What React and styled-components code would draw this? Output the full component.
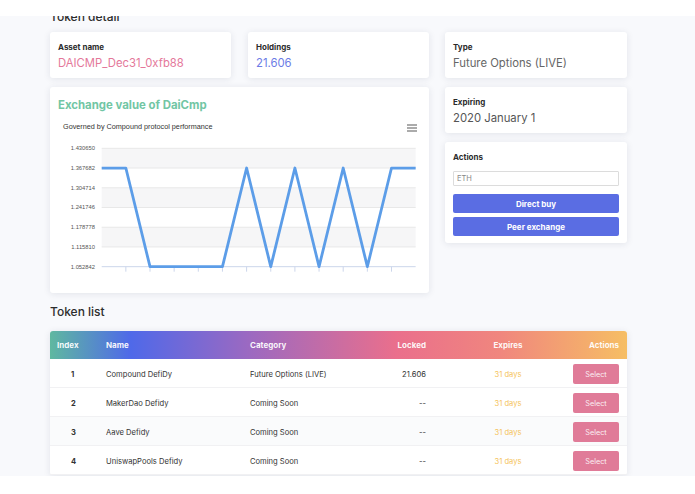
import styled, { createGlobalStyle } from 'styled-components'

const GlobalStyle = createGlobalStyle`
  body {
    margin: 0;
    background: #ffffff;
    font-family: Inter, "Noto Sans", sans-serif;
    color: #333;
  }
`

const TopBar = styled.header`
  height: 16px;
  background: #ffffff;
`

const Main = styled.main`
  background: #f8f9fc;
  padding: 0 50px 1px;
  overflow: hidden;
`

const Content = styled.div`
  width: 577px;
`

const Heading = styled.h2`
  margin: ${(p) => (p.$clipped ? '-6px' : '12px')} 0 0;
  font-size: 12px;
  line-height: 14px;
  font-weight: 500;
  color: #2d2d2d;
`

const DetailGrid = styled.div`
  display: grid;
  grid-template-columns: 379px 182px;
  column-gap: 16px;
  margin-top: 8px;
`

const Column = styled.div`
  display: flex;
  flex-direction: column;
  gap: 9px;
`

const CardRow = styled.div`
  display: grid;
  grid-template-columns: 181px 181px;
  column-gap: 17px;
`

const Card = styled.section`
  background: #ffffff;
  border-radius: 3px;
  box-shadow: 0 1px 7px rgba(30, 40, 70, 0.1);
  padding: 9px 8px 7px;
`

const Label = styled.div`
  font-size: 8px;
  line-height: 12px;
  font-weight: 700;
  color: #2b2b2b;
`

const Value = styled.div`
  margin-top: 2px;
  font-size: 11.3px;
  line-height: 16px;
  color: ${(p) => p.$color || '#666'};
`

const ChartCard = styled(Card)`
  padding: 11px 8px 8px;
  height: 187px;
`

const ChartTitle = styled.h3`
  margin: 0;
  font-size: 11.4px;
  line-height: 14px;
  font-weight: 700;
  color: #72c6a4;
`

const ChartSvg = styled.svg`
  display: block;
  margin-top: 4px;
  font-family: "Liberation Sans", Arial, sans-serif;
`

const Input = styled.input`
  display: block;
  box-sizing: border-box;
  width: 100%;
  height: 15px;
  margin-top: 8px;
  padding: 0 3px;
  border: 1px solid #dcdcdc;
  border-radius: 1px;
  font-family: inherit;
  font-size: 7.5px;
  color: #333;
  &::placeholder {
    color: #888;
  }
`

const ButtonStack = styled.div`
  display: flex;
  flex-direction: column;
  gap: 4px;
  margin-top: 8px;
`

const PrimaryButton = styled.button`
  height: 19px;
  border: none;
  border-radius: 2px;
  background: #5a6de3;
  color: #fff;
  font-family: inherit;
  font-size: 8px;
  font-weight: 700;
`

const Table = styled.div`
  margin-top: 12px;
  background: #ffffff;
  border-radius: 3px;
  box-shadow: 0 1px 7px rgba(30, 40, 70, 0.1);
`

const Row = styled.div`
  display: grid;
  grid-template-columns: 56px 144px 96px 100px 124px 1fr;
  align-items: center;
  height: ${(p) => (p.$head ? '28px' : '29px')};
  padding: ${(p) => (p.$head ? '0 8px 0 0' : '2px 8px 0 0')};
  font-size: 7.6px;
  color: #333;
  background: ${(p) => (p.$shade ? '#fafbfc' : 'transparent')};
  border-bottom: ${(p) => (p.$head ? 'none' : '1px solid #f1f1f3')};
  box-sizing: border-box;
`

const HeadRow = styled(Row)`
  border-radius: 3px 3px 0 0;
  background: linear-gradient(90deg, #5fb8a0 0%, #4f69e9 14%, #9a69c2 34%, #ea6f8c 60%, #f0867e 78%, #f6be64 100%);
  color: rgba(255, 255, 255, 0.95);
  font-weight: 700;
  font-size: 8px;
`

const Cell = styled.div`
  text-align: ${(p) => p.$align || 'left'};
  padding-left: ${(p) => p.$pl || 0}px;
  padding-right: ${(p) => p.$pr || 0}px;
  font-weight: ${(p) => (p.$bold ? 700 : 'inherit')};
  color: ${(p) => p.$color || 'inherit'};
`

const ActionCell = styled.div`
  display: flex;
  justify-content: flex-end;
`

const SelectButton = styled.button`
  width: 46px;
  height: 20px;
  border: none;
  border-radius: 2px;
  background: #e07b98;
  color: rgba(255, 255, 255, 0.9);
  font-family: inherit;
  font-size: 7.3px;
`

const yLabels = ['1.430650', '1.367682', '1.304714', '1.241746', '1.178778', '1.115810', '1.052842']
const pattern = [1, 1, 0, 0, 0, 0, 1, 0, 1, 0, 1, 0, 1, 1]

const gy = (i) => 32.3 + i * 19.73
const gx = (i) => 43.7 + i * 24.15

const ExchangeChart = () => {
  const points = pattern.map((hi, i) => `${gx(i)},${hi ? gy(1) : gy(6)}`).join(' ')
  return (
    <ChartSvg width="363" height="164" viewBox="0 0 363 164">
      <text x="5" y="13" fontSize="7.25" fill="#333">Governed by Compound protocol performance</text>
      <g stroke="#666" strokeWidth="1.1">
        <line x1="349" x2="359" y1="9" y2="9" />
        <line x1="349" x2="359" y1="12" y2="12" />
        <line x1="349" x2="359" y1="15" y2="15" />
      </g>
      {[0, 2, 4].map((i) => (
        <rect key={i} x={gx(0)} y={gy(i)} width={gx(13) - gx(0)} height={19.73} fill="#f6f6f7" />
      ))}
      {yLabels.map((l, i) => (
        <g key={l}>
          <line x1={gx(0)} x2={gx(13)} y1={gy(i)} y2={gy(i)} stroke={i === 6 ? '#ccd6eb' : '#e8e8e8'} strokeWidth="1" />
          <text x="37" y={gy(i) + 2} fontSize="5.8" fill="#555" textAnchor="end">{l}</text>
        </g>
      ))}
      {pattern.slice(1, 13).map((_, k) => (
        <line key={k} x1={gx(k + 1)} x2={gx(k + 1)} y1={gy(6)} y2={gy(6) + 5} stroke="#ccd6eb" />
      ))}
      <polyline points={points} fill="none" stroke="#5c9de8" strokeWidth="2.8" strokeLinejoin="round" />
    </ChartSvg>
  )
}

const tokens = [
  { name: 'Compound DefiDy', category: 'Future Options (LIVE)', locked: '21.606' },
  { name: 'MakerDao Defidy', category: 'Coming Soon', locked: '--' },
  { name: 'Aave Defidy', category: 'Coming Soon', locked: '--' },
  { name: 'UniswapPools Defidy', category: 'Coming Soon', locked: '--' },
]

const App = () => {
  return (
    <>
      <GlobalStyle />
      <TopBar />
      <Main>
        <Content>
          <Heading $clipped>Token detail</Heading>
          <DetailGrid>
            <Column>
              <CardRow>
                <Card>
                  <Label>Asset name</Label>
                  <Value $color="#e4789a">DAICMP_Dec31_0xfb88</Value>
                </Card>
                <Card>
                  <Label>Holdings</Label>
                  <Value $color="#6b7be6">21.606</Value>
                </Card>
              </CardRow>
              <ChartCard>
                <ChartTitle>Exchange value of DaiCmp</ChartTitle>
                <ExchangeChart />
              </ChartCard>
            </Column>
            <Column>
              <Card>
                <Label>Type</Label>
                <Value>Future Options (LIVE)</Value>
              </Card>
              <Card>
                <Label>Expiring</Label>
                <Value $color="#555">2020 January 1</Value>
              </Card>
              <Card>
                <Label>Actions</Label>
                <Input placeholder="ETH" />
                <ButtonStack>
                  <PrimaryButton>Direct buy</PrimaryButton>
                  <PrimaryButton>Peer exchange</PrimaryButton>
                </ButtonStack>
              </Card>
            </Column>
          </DetailGrid>

          <Heading>Token list</Heading>
          <Table>
            <HeadRow $head>
              <Cell $pl={7}>Index</Cell>
              <Cell>Name</Cell>
              <Cell>Category</Cell>
              <Cell $align="right" $pr={20}>Locked</Cell>
              <Cell $align="center">Expires</Cell>
              <Cell $align="right">Actions</Cell>
            </HeadRow>
            {tokens.map((t, i) => (
              <Row key={t.name} $shade={i === 2}>
                <Cell $pl={21} $bold>{i + 1}</Cell>
                <Cell>{t.name}</Cell>
                <Cell>{t.category}</Cell>
                <Cell $align="right" $pr={20}>{t.locked}</Cell>
                <Cell $align="center" $color="#f5c45e">31 days</Cell>
                <ActionCell>
                  <SelectButton>Select</SelectButton>
                </ActionCell>
              </Row>
            ))}
          </Table>
        </Content>
      </Main>
    </>
  )
}

export default App
